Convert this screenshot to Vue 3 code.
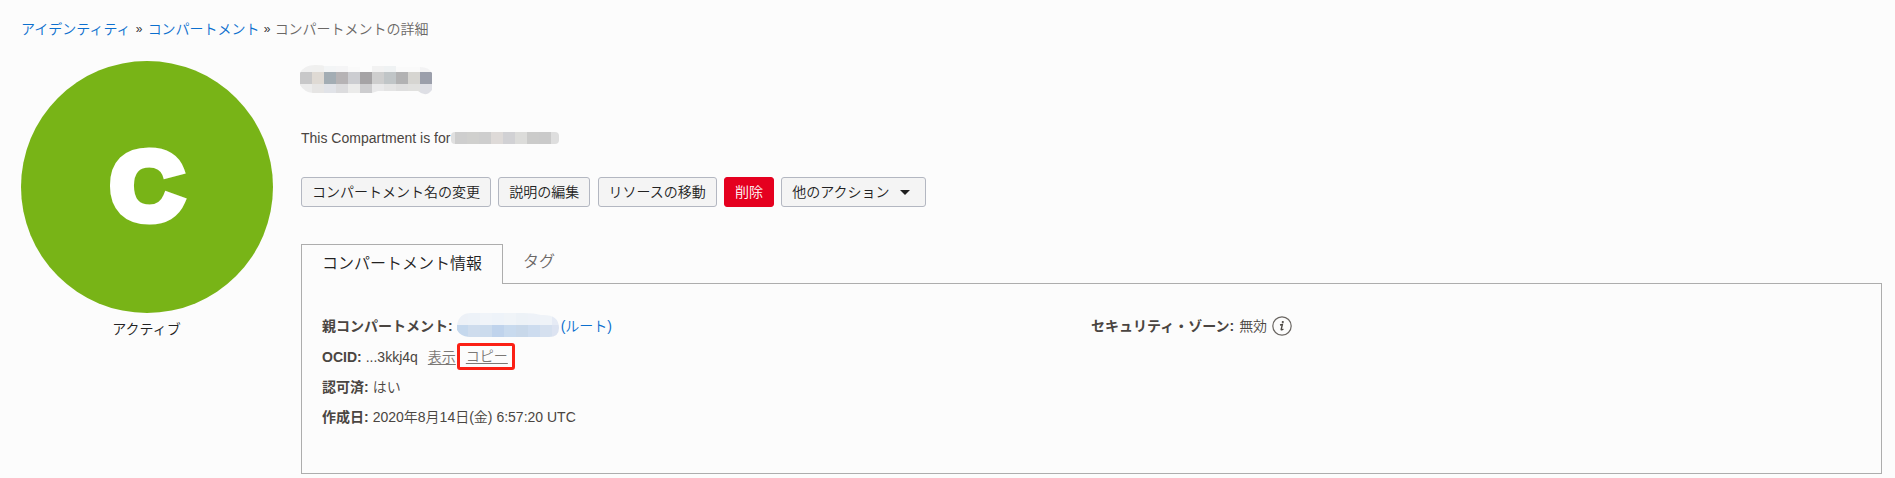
<script setup>
const actions = [
  { label: 'コンパートメント名の変更' },
  { label: '説明の編集' },
  { label: 'リソースの移動' },
  { label: '削除', danger: true },
  { label: '他のアクション', menu: true },
]
const titleRows = [
  { y: 0, h: 7, c: ['#f0f0f0', '#f0f0ef', '#f3f5f6', '#f5f5f6', '#fafafa', '#fcfcfc', '#f2f2f2', '#eff2f3', '#fafafa', '#fafafa', '#f3f3f4'] },
  { y: 7, h: 12, c: ['#c8c8c9', '#dfdad4', '#a3adb4', '#b6b3b5', '#cccdd1', '#a5a3a5', '#cecece', '#c0c5c7', '#b2b2b3', '#d6d5d1', '#9b9fab'] },
  { y: 19, h: 11, c: ['#ececec', '#e6e5e4', '#e1e3e8', '#dcdcde', '#ebebea', '#cdcdcf', '#e9e9ea', '#e4e4e4', '#dfdfdf', '#e1e1df', '#dedfe5'] },
]
const nameCells = ['#e0e0e0', '#cecece', '#d0d0ce', '#cecece', '#dedad8', '#d1d1d4', '#dcdcda', '#cbcbca', '#cacaca', '#dedede']
const parentRows = [
  { y: 0, h: 12, c: ['#edf1f7', '#edf2f8', '#f0f4f9', '#eef3f9', '#f0f4f8', '#edf2f7', '#eef2f8', '#eff3f8', '#e6ebf5'] },
  { y: 12, h: 12, c: ['#c5d8ed', '#cedced', '#cbdbed', '#bfd3ec', '#c8daee', '#c8d8ea', '#cddcef', '#d5e0ef', '#dce3f1'] },
]
</script>

<template>
  <div class="page">
    <nav class="crumbs">
      <a>アイデンティティ</a><span class="sep first">»</span><a>コンパートメント</a><span class="sep">»</span><span class="current">コンパートメントの詳細</span>
    </nav>
    <div class="layout">
      <aside class="status">
        <svg class="badge" width="252" height="252" viewBox="0 0 252 252">
          <circle cx="126" cy="126" r="126" fill="#78b417" />
          <text class="letter" transform="translate(126 158.4) scale(1.04 1)" text-anchor="middle">C</text>
        </svg>
        <div class="state">アクティブ</div>
      </aside>
      <main class="main">
        <svg class="title" width="132" height="30" viewBox="0 0 132 30">
          <defs>
            <clipPath id="titleClip"><path d="M0 8Q4 0 15 0Q23 0 24 1H48V2H72V1H96V2H120Q129 2 132 8V25Q126 33 118 26H78L72 28H13Q4 27 0 20Z" /></clipPath>
          </defs>
          <g clip-path="url(#titleClip)" shape-rendering="crispEdges">
            <template v-for="r in titleRows" :key="r.y">
              <rect v-for="(c, i) in r.c" :key="i" :x="i * 12" :y="r.y" width="12" :height="r.h" :fill="c" />
            </template>
          </g>
        </svg>
        <div class="desc">
          <span>This Compartment is for</span>
          <svg class="name" width="108" height="12" viewBox="0 0 108 12">
            <defs><clipPath id="nameClip"><rect width="108" height="12" rx="4" /></clipPath></defs>
            <g clip-path="url(#nameClip)" shape-rendering="crispEdges">
              <rect v-for="(c, i) in nameCells" :key="i" :x="i * 12 - 8" y="0" width="12" height="12" :fill="c" />
            </g>
          </svg>
        </div>
        <div class="actions">
          <button v-for="a in actions" :key="a.label" :class="['btn', { danger: a.danger, menu: a.menu }]">
            {{ a.label }}<svg v-if="a.menu" class="caret" width="10" height="5" viewBox="0 0 10 5"><path d="M0 0H10L5 5Z" fill="#1f1f1f" /></svg>
          </button>
        </div>
        <div class="tabs">
          <div class="tab active">コンパートメント情報</div>
          <div class="tab">タグ</div>
        </div>
        <section class="panel">
          <div class="col">
            <div class="row">
              <b>親コンパートメント:</b>
              <svg class="parent" width="102" height="24" viewBox="0 0 102 24">
                <defs><clipPath id="parentClip"><path d="M0 12Q2 0 14 0H66Q78 0 84 2Q102 1 102 15Q102 24 92 24H12Q3 23 0 17Z" /></clipPath></defs>
                <g clip-path="url(#parentClip)" shape-rendering="crispEdges">
                  <template v-for="r in parentRows" :key="r.y">
                    <rect v-for="(c, i) in r.c" :key="i" :x="i * 12 - 1" :y="r.y" width="12" :height="r.h" :fill="c" />
                  </template>
                </g>
              </svg>
              <a>(ルート)</a>
            </div>
            <div class="row">
              <b>OCID:</b><span class="val">...3kkj4q</span>
              <span class="link show">表示</span>
              <span class="mark"><span class="link">コピー</span></span>
            </div>
            <div class="row"><b>認可済:</b><span class="val">はい</span></div>
            <div class="row"><b>作成日:</b><span class="val">2020年8月14日(金) 6:57:20 UTC</span></div>
          </div>
          <div class="col">
            <div class="row">
              <b>セキュリティ・ゾーン:</b><span class="val zone">無効</span>
              <svg class="info" width="20" height="20" viewBox="0 0 20 20">
                <circle cx="10" cy="10" r="9.2" fill="none" stroke="#6a6662" stroke-width="1.2" />
                <circle cx="10.8" cy="6" r="1.1" fill="#4a4642" />
                <path d="M8 9L10.4 8.5L9.2 13.4Q9 14.5 11.4 13.2" fill="none" stroke="#4a4642" stroke-width="1.4" />
              </svg>
            </div>
          </div>
        </section>
      </main>
    </div>
  </div>
</template>

<style>
body {
  margin: 0;
  background: #fcfcfc;
}
</style>

<style scoped>
.page {
  box-sizing: border-box;
  width: 1895px;
  height: 478px;
  padding: 19px 13px 0 21px;
  overflow: hidden;
  background: #fcfcfc;
  color: #4a4541;
  font: 350 14px/20px "Liberation Sans", "Noto Sans CJK JP", sans-serif;
}
b {
  font-weight: 700;
}
.crumbs {
  display: flex;
  height: 20px;
}
a {
  color: #0c6fce;
}
.sep {
  width: 15px;
  text-align: center;
  color: #333;
  font-size: 12px;
}
.sep.first {
  width: 17px;
}
.current {
  color: #6b6866;
}
.layout {
  display: flex;
  gap: 28px;
  padding-top: 22px;
}
.status {
  width: 252px;
  text-align: center;
}
.badge {
  display: block;
}
.letter {
  font: bold 97px "Liberation Sans", sans-serif;
  fill: #fff;
  stroke: #fff;
  stroke-width: 9px;
  stroke-linejoin: miter;
}
.state {
  margin: 6px 1px 0 0;
  color: #222;
}
.main {
  flex: 1;
}
.title {
  display: block;
  margin: 4px 0 0 -1px;
}
.desc {
  display: flex;
  align-items: center;
  height: 20px;
  margin-top: 33px;
}
.name {
  margin-left: 1px;
}
.actions {
  display: flex;
  gap: 7.25px;
  margin-top: 29px;
}
.btn {
  box-sizing: border-box;
  height: 30px;
  padding: 0 10px;
  border: 1px solid #b3b7c1;
  border-radius: 3px;
  background: #f4f4f4;
  color: #222;
  font: inherit;
  line-height: 28px;
  white-space: nowrap;
}
.btn.danger {
  border-color: #e5001f;
  background: #e5001f;
  color: #fff;
}
.btn.menu {
  width: 145px;
  text-align: left;
}
.caret {
  margin-left: 10px;
  vertical-align: 2px;
}
.tabs {
  display: flex;
  height: 39px;
  margin-top: 37px;
  font-size: 16px;
}
.tab {
  box-sizing: border-box;
  height: 39px;
  padding: 1px 20px 0;
  color: #6b6866;
  line-height: 34px;
}
.tab.active {
  height: 40px;
  border: 1px solid #adadad;
  border-bottom: 0;
  background: #fcfcfc;
  color: #222;
  line-height: 36px;
  z-index: 1;
}
.panel {
  box-sizing: border-box;
  display: grid;
  grid-template-columns: 769px 1fr;
  width: 1581px;
  height: 191px;
  padding: 27px 0 0 20px;
  border: 1px solid #adadad;
}
.row {
  display: flex;
  align-items: center;
  height: 30.4px;
  white-space: nowrap;
}
.val {
  margin-left: 4px;
}
.zone {
  margin-left: 5px;
}
.parent {
  margin: -3px 2px 0 4px;
}
.link {
  color: #7b7875;
  text-decoration: underline;
  text-underline-offset: 2px;
}
.show {
  margin-left: 10px;
}
.mark {
  box-sizing: border-box;
  width: 58px;
  height: 27px;
  margin-left: 1px;
  padding-left: 6px;
  border: 3px solid #fb2015;
  border-radius: 3px;
  line-height: 20px;
}
.info {
  margin-left: 5px;
}
</style>
